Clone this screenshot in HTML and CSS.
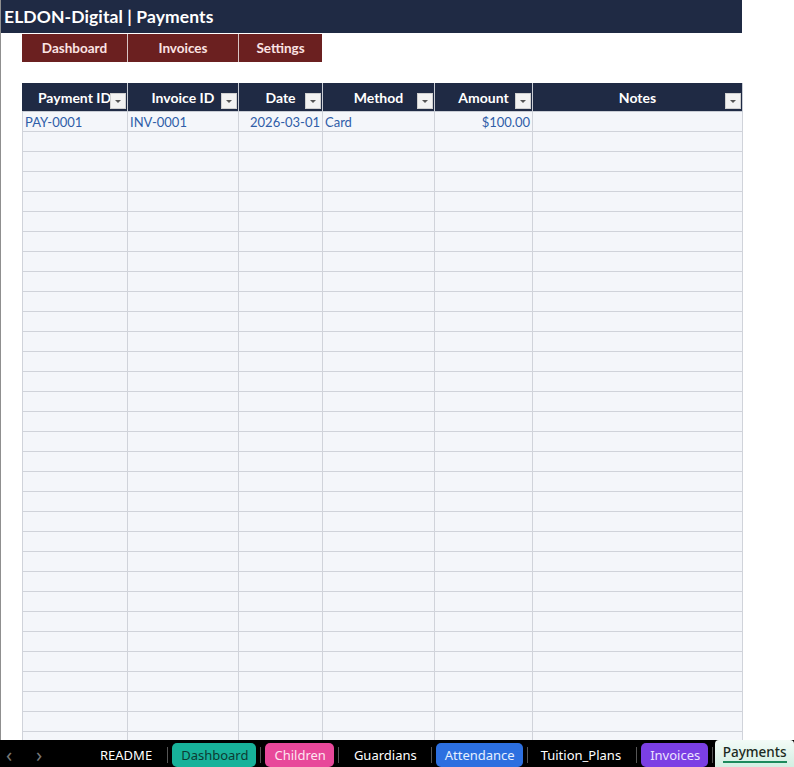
FILE: index.html
```html
<!DOCTYPE html>
<html>
<head>
<meta charset="utf-8">
<link rel="stylesheet" href="styles.css">
</head>
<body>
<div class="app">
  <div class="sheet">
    <div class="title">ELDON-Digital | Payments</div>
    <div class="nav">
      <div class="nav-btn w1">Dashboard</div>
      <div class="nav-btn w2">Invoices</div>
      <div class="nav-btn w3">Settings</div>
    </div>
    <div class="table">
      <div class="th"><span>Payment ID</span><i class="flt"></i></div>
      <div class="th"><span>Invoice ID</span><i class="flt"></i></div>
      <div class="th"><span>Date</span><i class="flt"></i></div>
      <div class="th"><span>Method</span><i class="flt"></i></div>
      <div class="th"><span>Amount</span><i class="flt"></i></div>
      <div class="th"><span>Notes</span><i class="flt"></i></div>

      <div class="td">PAY-0001</div>
      <div class="td">INV-0001</div>
      <div class="td num">2026-03-01</div>
      <div class="td">Card</div>
      <div class="td num">$100.00</div>
      <div class="td"></div>
    </div>
    <div class="table empty" id="rows"></div>
  </div>
  <div class="tabs">
    <span class="arrow">&lsaquo;</span>
    <span class="arrow a2">&rsaquo;</span>
    <span class="tab plain t-readme">README</span>
    <span class="sep"></span>
    <span class="tab pill teal">Dashboard</span>
    <span class="sep"></span>
    <span class="tab pill pink">Children</span>
    <span class="sep"></span>
    <span class="tab plain t-guard">Guardians</span>
    <span class="sep"></span>
    <span class="tab pill blue">Attendance</span>
    <span class="sep"></span>
    <span class="tab plain t-tuition">Tuition_Plans</span>
    <span class="sep"></span>
    <span class="tab pill purple">Invoices</span>
    <span class="sep last"></span>
    <span class="tab active">Payments</span>
  </div>
</div>
<script src="script.js"></script>
</body>
</html>
```

FILE: script.js
```js
var rows = document.getElementById('rows');
var html = '';
for (var r = 0; r < 31; r++) {
  for (var c = 0; c < 6; c++) html += '<div class="td"></div>';
}
rows.innerHTML = html;
```

FILE: styles.css
```css
html, body {
  margin: 0;
  padding: 0;
  background: #ffffff;
}
body {
  width: 794px;
  height: 767px;
  overflow: hidden;
  font-family: Lato, "Open Sans", "Liberation Sans", sans-serif;
}
.app {
  display: flex;
  flex-direction: column;
  width: 794px;
  height: 767px;
}
.sheet {
  height: 740px;
  overflow: hidden;
  border-left: 1px solid #8f8f8f;
  box-sizing: border-box;
  background: #fff;
}
.title {
  width: 741px;
  height: 33px;
  background: #1f2a44;
  color: #fff;
  font-weight: 700;
  font-size: 17.5px;
  line-height: 34px;
  padding-left: 3px;
  box-sizing: border-box;
  letter-spacing: 0.1px;
}
.nav {
  display: flex;
  margin: 1px 0 0 21px;
  height: 28px;
}
.nav-btn {
  background: #6b2020;
  color: #fbe3e3;
  font-weight: 700;
  font-size: 13.5px;
  display: flex;
  align-items: center;
  justify-content: center;
  border-right: 1px solid #d9c6c6;
}
.nav-btn.w1 { width: 105px; }
.nav-btn.w2 { width: 110px; }
.nav-btn.w3 { width: 83px; border-right: none; }
.table {
  display: grid;
  grid-template-columns: 106px 111px 84px 112px 98px 210px;
  margin-left: 21px;
  width: 721px;
}
.nav + .table { margin-top: 21px; }
.th {
  background: #1f2a44;
  color: #fff;
  font-weight: 700;
  font-size: 14px;
  height: 28px;
  position: relative;
  display: flex;
  align-items: center;
  justify-content: center;
  border-right: 1px solid #c8ccd4;
  border-bottom: 1px solid #c8ccd4;
  box-sizing: content-box;
}
.th span { position: relative; z-index: 0; }
.flt {
  position: absolute;
  right: 1px;
  bottom: 2px;
  width: 16px;
  height: 16px;
  background: #f2f2f2;
  border: 1px solid #cfcfcf;
  box-sizing: border-box;
  z-index: 1;
}
.flt::after {
  content: "";
  position: absolute;
  left: 4px;
  top: 6px;
  border-left: 3.5px solid transparent;
  border-right: 3.5px solid transparent;
  border-top: 3.5px solid #555;
}
.td {
  height: 20px;
  box-sizing: border-box;
  background: #f4f6fa;
  border-right: 1px solid #d0d3da;
  border-bottom: 1px solid #d0d3da;
  color: #2f5da8;
  font-size: 13px;
  line-height: 21px;
  padding-left: 2px;
  padding-right: 2px;
  white-space: nowrap;
  overflow: hidden;
}
.td:nth-child(6n+1) { border-left: 1px solid #d0d3da; }
.td.num { text-align: right; }
.tabs {
  height: 27px;
  background: #000;
  display: flex;
  align-items: center;
  color: #fff;
  font-family: "Noto Sans", "Open Sans", sans-serif;
  font-size: 13px;
  position: relative;
}
.arrow {
  color: #777;
  font-size: 20px;
  line-height: 20px;
  margin-left: 6px;
  width: 10px;
  padding-top: 2px;
}
.arrow.a2 { margin-left: 20px; }
.tab {
  height: 24px;
  line-height: 24px;
  white-space: nowrap;
  margin-top: 3px;
}
.t-readme { margin-left: 54px; padding: 0 11px 0 0; }
.sep {
  width: 1px;
  height: 16px;
  background: #555;
  margin: 3px 4px 0 4px;
}
.pill {
  border-radius: 5px;
  padding: 0 8px 0 9px;
}
.teal { background: #17b29a; color: #0d3b33; }
.pink { background: #e8489a; color: #fde6f1; }
.blue { background: #2c6fe0; color: #e6efff; }
.purple { background: #7b3fe4; color: #ece3ff; }
.t-guard { padding: 0 10px 0 11px; }
.t-tuition { padding: 0 11px 0 9px; }
.sep.last { margin-right: 2px; }
.active {
  height: 27px;
  margin-top: 0;
  flex: 1;
  background: linear-gradient(#f3fbf7, #d3efe2);
  color: #1b2a22;
  border-radius: 4px 4px 0 0;
  text-align: center;
  line-height: 24px;
  font-size: 13.5px;
  font-weight: 500;
  position: relative;
}
.active::after {
  content: "";
  position: absolute;
  left: 8px;
  right: 7px;
  bottom: 4px;
  height: 2px;
  background: #1d8a5c;
}
```
